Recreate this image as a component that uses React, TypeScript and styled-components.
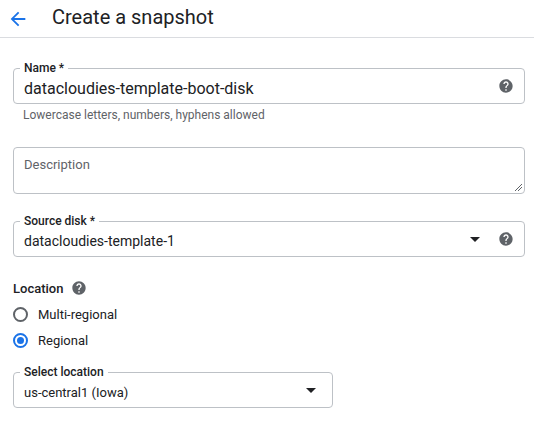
import React from "react";
import styled, { createGlobalStyle } from "styled-components";

const Global = createGlobalStyle`
  body { margin: 0; background: #fff; font-family: Roboto, "Liberation Sans", sans-serif; color: #202124; }
`;

const Header = styled.div`
  height: 37px; display: flex; align-items: center; border-bottom: 1px solid #dadce0;
  padding-left: 7px; gap: 23px;
`;
const Title = styled.div`font-size: 20px; color: #202124; margin-top: -4px;`;
const Body = styled.div`padding: 30px 9px 0 13px; display: flex; flex-direction: column;`;

const Field = styled.div<{ $w?: number; $h: number; $mt?: number }>`
  position: relative; box-sizing: border-box; width: ${p => (p.$w ? p.$w + "px" : "100%")};
  height: ${p => p.$h}px; border: 1px solid #bdc1c6; border-radius: 4px;
  margin-top: ${p => p.$mt || 0}px; display: flex; align-items: center; padding: 0 10px; gap: 12px;
`;
const Label = styled.span`
  position: absolute; left: 6px; top: -8px; background: #fff; padding: 0 4px;
  font-size: 12px; font-weight: 500; color: #202124; line-height: 14px;
`;
const Value = styled.div<{ $size: number }>`flex: 1; font-size: ${p => p.$size}px; color: #202124; padding-top: 4px;`;
const Placeholder = styled.div`position: absolute; left: 10px; top: 9px; font-size: 13px; color: #5f6368;`;
const Hint = styled.div`font-size: 12px; color: #5f6368; margin: 4px 0 0 10px;`;
const Caret = styled.span`width:0;height:0;border-left:5px solid transparent;border-right:5px solid transparent;border-top:5px solid #202124;margin-right:6px;`;
const Section = styled.div`margin-top: 23px; font-size: 13px; font-weight: 500; display:flex; align-items:center; gap:8px;`;
const RadioRow = styled.div<{ $mt: number }>`display:flex;align-items:center;gap:10px;font-size:13px;margin-top:${p=>p.$mt}px;`;
const Radio = styled.span<{ $on?: boolean }>`
  width: 15px; height: 15px; box-sizing: border-box; border-radius: 50%;
  border: 2px solid ${p => (p.$on ? "#1a73e8" : "#5f6368")}; display:flex;align-items:center;justify-content:center;
  &::after { content: ""; width: 7px; height: 7px; border-radius: 50%; background: ${p => (p.$on ? "#1a73e8" : "transparent")}; }
`;
const Resize = styled.svg`position:absolute;right:2px;bottom:2px;`;

const Help = ({ s = 16 }: { s?: number }) => (
  <svg width={s} height={s} viewBox="0 0 24 24"><path fill="#5f6368" d="M12 2C6.48 2 2 6.48 2 12s4.48 10 10 10 10-4.48 10-10S17.52 2 12 2zm1 17h-2v-2h2v2zm2.070-7.75l-.9.92C13.45 12.9 13 13.5 13 15h-2v-.5c0-1.1.45-2.1 1.17-2.830l1.24-1.26c.37-.36.59-.86.59-1.41 0-1.1-.9-2-2-2s-2 .9-2 2H8c0-2.21 1.79-4 4-4s4 1.79 4 4c0 .88-.36 1.68-.93 2.25z"/></svg>
);

export default function App() {
  return (
    <>
      <Global />
      <Header>
        <svg width="22" height="22" viewBox="0 0 24 24"><path fill="#1a73e8" d="M20 11H7.83l5.59-5.59L12 4l-8 8 8 8 1.41-1.41L7.83 13H20v-2z"/></svg>
        <Title>Create a snapshot</Title>
      </Header>
      <Body>
        <Field $h={36}>
          <Label>Name *</Label>
          <Value $size={16}>datacloudies-template-boot-disk</Value>
          <Help />
        </Field>
        <Hint>Lowercase letters, numbers, hyphens allowed</Hint>
        <Field $h={47} $mt={25}>
          <Placeholder>Description</Placeholder>
          <Resize width="8" height="8" viewBox="0 0 8 8"><path d="M1 8L8 1M4 8L8 4" stroke="#5f6368" strokeWidth="1"/></Resize>
        </Field>
        <Field $h={36} $mt={27}>
          <Label>Source disk *</Label>
          <Value $size={14}>datacloudies-template-1</Value>
          <Caret />
          <Help />
        </Field>
        <Section>Location <Help /></Section>
        <RadioRow $mt={11}><Radio />Multi-regional</RadioRow>
        <RadioRow $mt={11}><Radio $on />Regional</RadioRow>
        <Field $w={320} $h={36} $mt={24}>
          <Label>Select location</Label>
          <Value $size={13}>us-central1 (Iowa)</Value>
          <Caret />
        </Field>
      </Body>
    </>
  );
}
